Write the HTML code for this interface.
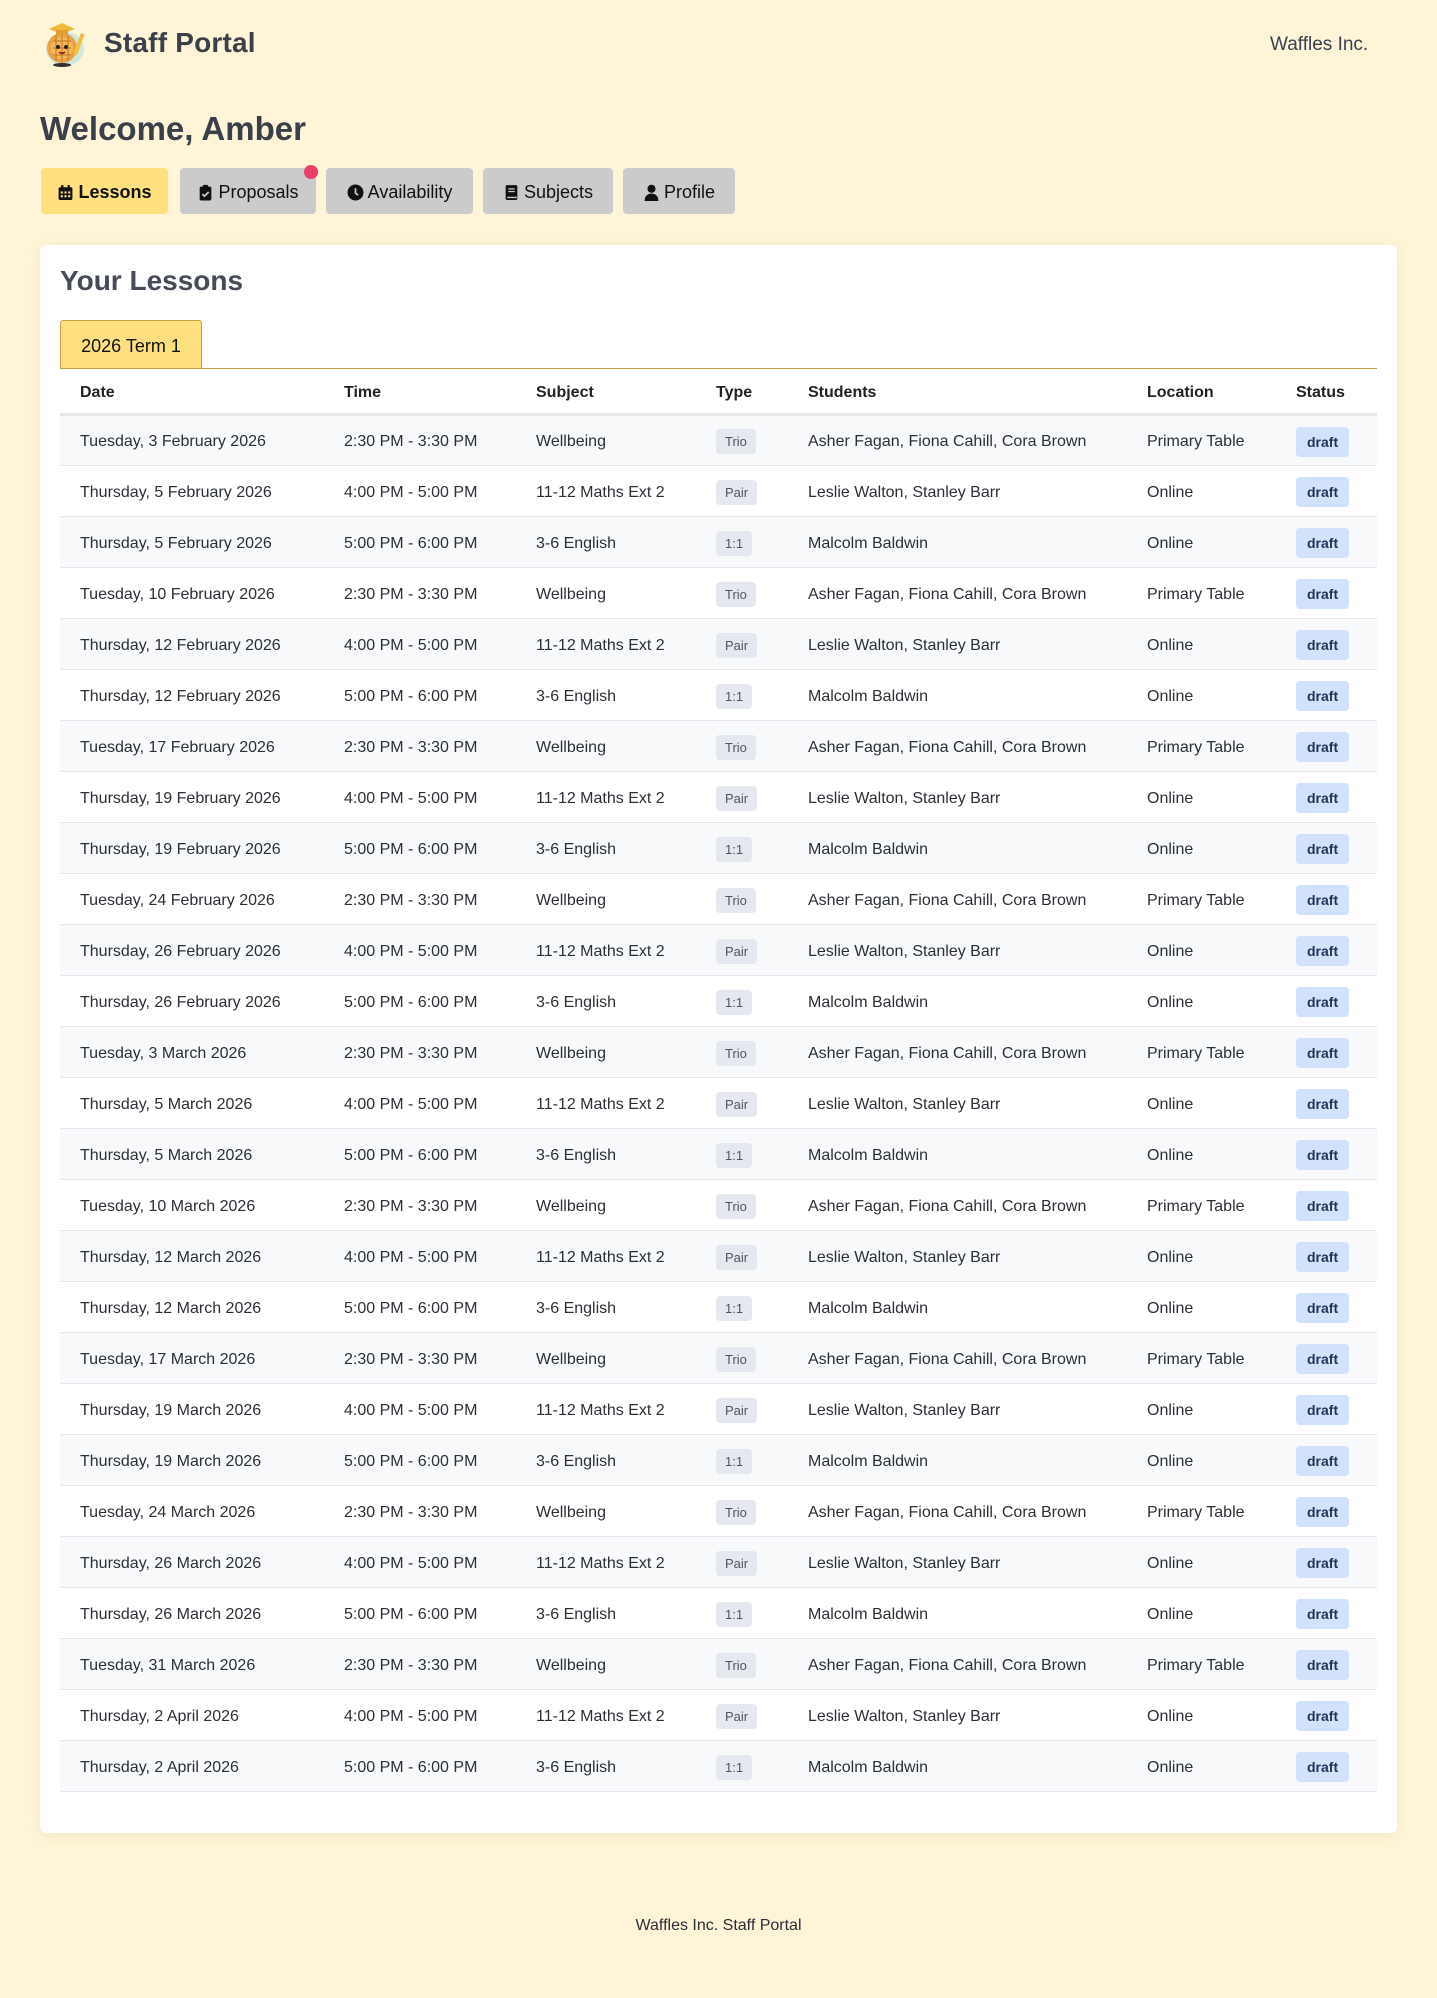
<!DOCTYPE html>
<html><head><meta charset="utf-8">
<style>
*{box-sizing:border-box;margin:0;padding:0}
body{width:1437px;height:1998px;background:#fef5d8;font-family:"Liberation Sans",sans-serif;color:#1f2937;position:relative;overflow:hidden}
.abs{position:absolute}
.brand{left:104px;top:27px;font-size:28px;font-weight:bold;color:#3a3f4a;letter-spacing:0.2px}
.co{left:1270px;top:34px;font-size:19px;color:#374151}
.welcome{left:40px;top:110px;font-size:33px;font-weight:bold;color:#3a3f4a}
.btn{position:absolute;top:168px;height:46px;border-radius:4px;background:#cbcbcb;font-size:18px;color:#111;display:flex;align-items:center;justify-content:center;gap:4px;padding-top:2px}
.btn svg{width:17px;height:17px}
.card{left:40px;top:245px;width:1357px;height:1588px;background:#fff;border-radius:6px;box-shadow:0 2px 14px rgba(200,170,90,.18)}
.h2{left:60px;top:265px;font-size:28px;font-weight:bold;color:#454b57}
.tab{left:60px;top:320px;width:142px;height:49px;background:#ffdf7e;border:1px solid #c2a049;border-bottom:none;border-radius:3px 3px 0 0;font-size:18px;display:flex;align-items:center;justify-content:center;color:#111;padding-top:2px}
.line{left:60px;top:368px;width:1317px;height:1px;background:#c2a049}
table{position:absolute;left:60px;top:369px;width:1317px;border-collapse:collapse;table-layout:fixed;font-size:16px;color:#2b2f36}
th{height:45px;text-align:left;padding-left:20px;padding-top:4px;font-weight:bold;font-size:16px;color:#222;border-bottom:3px solid #e5e7eb}
td{height:51px;padding-left:20px;padding-top:4px;border-bottom:1px solid #e5e7eb;white-space:nowrap}
tbody tr:nth-child(odd){background:#f8f9fa}
.ty{display:inline-block;vertical-align:middle;margin-top:-1px;background:#e6e8ef;color:#4b5563;font-size:13px;height:25px;line-height:25px;padding:0 9px;border-radius:4px}
.dr{display:inline-block;vertical-align:middle;margin-top:-1px;background:#d2e2fb;color:#1e3455;font-size:14px;font-weight:bold;height:30px;line-height:30px;padding:0 11px;border-radius:4px}
.foot{left:0;width:1437px;top:1917px;text-align:center;font-size:16px;color:#2b2f36}
</style></head><body>
<svg class="abs" style="left:41px;top:19px" width="46" height="50" viewBox="0 0 46 50">
<ellipse cx="24" cy="30" rx="19" ry="17" fill="#cfe9df"/>
<circle cx="21" cy="29" r="15" fill="#e9a343"/>
<circle cx="21" cy="29" r="11" fill="#f2b85a"/>
<path d="M12 22h18M12 29h18M12 36h18M15 16v26M21 15v28M27 16v26" stroke="#c9802a" stroke-width="1.2"/>
<polygon points="8,10 21,4 34,10 21,15" fill="#f0b93a"/>
<rect x="15" y="11" width="12" height="5" fill="#e0a030"/>
<circle cx="17" cy="28" r="2" fill="#222"/><circle cx="25" cy="28" r="2" fill="#222"/>
<path d="M18 33q3 3 6 0" stroke="#822" stroke-width="1.5" fill="#d44"/>
<rect x="36" y="14" width="4" height="22" fill="#f4c040" transform="rotate(20 38 25)"/>
<ellipse cx="21" cy="46" rx="9" ry="2" fill="#333"/>
</svg>
<div class="abs brand">Staff Portal</div>
<div class="abs co">Waffles Inc.</div>
<div class="abs welcome">Welcome, Amber</div>

<div class="btn" style="left:41px;width:127px;background:#ffdf7e;font-weight:bold"><svg viewBox="0 0 16 16"><rect x="1.5" y="3" width="13" height="12" rx="1.5" fill="#111"/><rect x="4" y="1" width="2" height="4" fill="#111"/><rect x="10" y="1" width="2" height="4" fill="#111"/><g fill="#ffdf7e"><rect x="3.5" y="7" width="2" height="2"/><rect x="7" y="7" width="2" height="2"/><rect x="10.5" y="7" width="2" height="2"/><rect x="3.5" y="10.5" width="2" height="2"/><rect x="7" y="10.5" width="2" height="2"/><rect x="10.5" y="10.5" width="2" height="2"/></g></svg>Lessons</div>
<div class="btn" style="left:180px;width:136px"><svg viewBox="0 0 16 16"><rect x="2.5" y="2.5" width="11" height="13" rx="1.5" fill="#111"/><rect x="5.5" y="0.8" width="5" height="3" rx="1" fill="#111"/><path d="M5 9.5l2 2 4-4" stroke="#cbcbcb" stroke-width="1.6" fill="none"/></svg>Proposals</div>
<div class="abs" style="left:304px;top:165px;width:14px;height:14px;border-radius:50%;background:#ec3f68"></div>
<div class="btn" style="left:326px;width:147px"><svg viewBox="0 0 16 16"><circle cx="8" cy="8" r="7.5" fill="#111"/><path d="M8 4v4.5l2.5 2" stroke="#cbcbcb" stroke-width="1.6" fill="none"/></svg>Availability</div>
<div class="btn" style="left:483px;width:130px"><svg viewBox="0 0 16 16"><rect x="2.5" y="1" width="11" height="14" rx="1.5" fill="#111"/><rect x="4" y="12" width="9" height="1.3" fill="#cbcbcb"/><rect x="5" y="4" width="6" height="1.2" fill="#cbcbcb"/><rect x="5" y="6.5" width="6" height="1.2" fill="#cbcbcb"/></svg>Subjects</div>
<div class="btn" style="left:623px;width:112px"><svg viewBox="0 0 16 16"><circle cx="8" cy="4.5" r="3.8" fill="#111"/><path d="M1.5 16c0-5 3-7 6.5-7s6.5 2 6.5 7z" fill="#111"/></svg>Profile</div>

<div class="abs card"></div>
<div class="abs h2">Your Lessons</div>
<div class="abs tab">2026 Term 1</div>
<div class="abs line"></div>
<table>
<colgroup><col style="width:264px"><col style="width:192px"><col style="width:180px"><col style="width:92px"><col style="width:339px"><col style="width:149px"><col style="width:101px"></colgroup>
<thead><tr><th>Date</th><th>Time</th><th>Subject</th><th>Type</th><th>Students</th><th>Location</th><th>Status</th></tr></thead>
<tbody>
<tr><td>Tuesday, 3 February 2026</td><td>2:30 PM - 3:30 PM</td><td>Wellbeing</td><td><span class="ty">Trio</span></td><td>Asher Fagan, Fiona Cahill, Cora Brown</td><td>Primary Table</td><td><span class="dr">draft</span></td></tr>
<tr><td>Thursday, 5 February 2026</td><td>4:00 PM - 5:00 PM</td><td>11-12 Maths Ext 2</td><td><span class="ty">Pair</span></td><td>Leslie Walton, Stanley Barr</td><td>Online</td><td><span class="dr">draft</span></td></tr>
<tr><td>Thursday, 5 February 2026</td><td>5:00 PM - 6:00 PM</td><td>3-6 English</td><td><span class="ty">1:1</span></td><td>Malcolm Baldwin</td><td>Online</td><td><span class="dr">draft</span></td></tr>
<tr><td>Tuesday, 10 February 2026</td><td>2:30 PM - 3:30 PM</td><td>Wellbeing</td><td><span class="ty">Trio</span></td><td>Asher Fagan, Fiona Cahill, Cora Brown</td><td>Primary Table</td><td><span class="dr">draft</span></td></tr>
<tr><td>Thursday, 12 February 2026</td><td>4:00 PM - 5:00 PM</td><td>11-12 Maths Ext 2</td><td><span class="ty">Pair</span></td><td>Leslie Walton, Stanley Barr</td><td>Online</td><td><span class="dr">draft</span></td></tr>
<tr><td>Thursday, 12 February 2026</td><td>5:00 PM - 6:00 PM</td><td>3-6 English</td><td><span class="ty">1:1</span></td><td>Malcolm Baldwin</td><td>Online</td><td><span class="dr">draft</span></td></tr>
<tr><td>Tuesday, 17 February 2026</td><td>2:30 PM - 3:30 PM</td><td>Wellbeing</td><td><span class="ty">Trio</span></td><td>Asher Fagan, Fiona Cahill, Cora Brown</td><td>Primary Table</td><td><span class="dr">draft</span></td></tr>
<tr><td>Thursday, 19 February 2026</td><td>4:00 PM - 5:00 PM</td><td>11-12 Maths Ext 2</td><td><span class="ty">Pair</span></td><td>Leslie Walton, Stanley Barr</td><td>Online</td><td><span class="dr">draft</span></td></tr>
<tr><td>Thursday, 19 February 2026</td><td>5:00 PM - 6:00 PM</td><td>3-6 English</td><td><span class="ty">1:1</span></td><td>Malcolm Baldwin</td><td>Online</td><td><span class="dr">draft</span></td></tr>
<tr><td>Tuesday, 24 February 2026</td><td>2:30 PM - 3:30 PM</td><td>Wellbeing</td><td><span class="ty">Trio</span></td><td>Asher Fagan, Fiona Cahill, Cora Brown</td><td>Primary Table</td><td><span class="dr">draft</span></td></tr>
<tr><td>Thursday, 26 February 2026</td><td>4:00 PM - 5:00 PM</td><td>11-12 Maths Ext 2</td><td><span class="ty">Pair</span></td><td>Leslie Walton, Stanley Barr</td><td>Online</td><td><span class="dr">draft</span></td></tr>
<tr><td>Thursday, 26 February 2026</td><td>5:00 PM - 6:00 PM</td><td>3-6 English</td><td><span class="ty">1:1</span></td><td>Malcolm Baldwin</td><td>Online</td><td><span class="dr">draft</span></td></tr>
<tr><td>Tuesday, 3 March 2026</td><td>2:30 PM - 3:30 PM</td><td>Wellbeing</td><td><span class="ty">Trio</span></td><td>Asher Fagan, Fiona Cahill, Cora Brown</td><td>Primary Table</td><td><span class="dr">draft</span></td></tr>
<tr><td>Thursday, 5 March 2026</td><td>4:00 PM - 5:00 PM</td><td>11-12 Maths Ext 2</td><td><span class="ty">Pair</span></td><td>Leslie Walton, Stanley Barr</td><td>Online</td><td><span class="dr">draft</span></td></tr>
<tr><td>Thursday, 5 March 2026</td><td>5:00 PM - 6:00 PM</td><td>3-6 English</td><td><span class="ty">1:1</span></td><td>Malcolm Baldwin</td><td>Online</td><td><span class="dr">draft</span></td></tr>
<tr><td>Tuesday, 10 March 2026</td><td>2:30 PM - 3:30 PM</td><td>Wellbeing</td><td><span class="ty">Trio</span></td><td>Asher Fagan, Fiona Cahill, Cora Brown</td><td>Primary Table</td><td><span class="dr">draft</span></td></tr>
<tr><td>Thursday, 12 March 2026</td><td>4:00 PM - 5:00 PM</td><td>11-12 Maths Ext 2</td><td><span class="ty">Pair</span></td><td>Leslie Walton, Stanley Barr</td><td>Online</td><td><span class="dr">draft</span></td></tr>
<tr><td>Thursday, 12 March 2026</td><td>5:00 PM - 6:00 PM</td><td>3-6 English</td><td><span class="ty">1:1</span></td><td>Malcolm Baldwin</td><td>Online</td><td><span class="dr">draft</span></td></tr>
<tr><td>Tuesday, 17 March 2026</td><td>2:30 PM - 3:30 PM</td><td>Wellbeing</td><td><span class="ty">Trio</span></td><td>Asher Fagan, Fiona Cahill, Cora Brown</td><td>Primary Table</td><td><span class="dr">draft</span></td></tr>
<tr><td>Thursday, 19 March 2026</td><td>4:00 PM - 5:00 PM</td><td>11-12 Maths Ext 2</td><td><span class="ty">Pair</span></td><td>Leslie Walton, Stanley Barr</td><td>Online</td><td><span class="dr">draft</span></td></tr>
<tr><td>Thursday, 19 March 2026</td><td>5:00 PM - 6:00 PM</td><td>3-6 English</td><td><span class="ty">1:1</span></td><td>Malcolm Baldwin</td><td>Online</td><td><span class="dr">draft</span></td></tr>
<tr><td>Tuesday, 24 March 2026</td><td>2:30 PM - 3:30 PM</td><td>Wellbeing</td><td><span class="ty">Trio</span></td><td>Asher Fagan, Fiona Cahill, Cora Brown</td><td>Primary Table</td><td><span class="dr">draft</span></td></tr>
<tr><td>Thursday, 26 March 2026</td><td>4:00 PM - 5:00 PM</td><td>11-12 Maths Ext 2</td><td><span class="ty">Pair</span></td><td>Leslie Walton, Stanley Barr</td><td>Online</td><td><span class="dr">draft</span></td></tr>
<tr><td>Thursday, 26 March 2026</td><td>5:00 PM - 6:00 PM</td><td>3-6 English</td><td><span class="ty">1:1</span></td><td>Malcolm Baldwin</td><td>Online</td><td><span class="dr">draft</span></td></tr>
<tr><td>Tuesday, 31 March 2026</td><td>2:30 PM - 3:30 PM</td><td>Wellbeing</td><td><span class="ty">Trio</span></td><td>Asher Fagan, Fiona Cahill, Cora Brown</td><td>Primary Table</td><td><span class="dr">draft</span></td></tr>
<tr><td>Thursday, 2 April 2026</td><td>4:00 PM - 5:00 PM</td><td>11-12 Maths Ext 2</td><td><span class="ty">Pair</span></td><td>Leslie Walton, Stanley Barr</td><td>Online</td><td><span class="dr">draft</span></td></tr>
<tr><td>Thursday, 2 April 2026</td><td>5:00 PM - 6:00 PM</td><td>3-6 English</td><td><span class="ty">1:1</span></td><td>Malcolm Baldwin</td><td>Online</td><td><span class="dr">draft</span></td></tr>
</tbody></table>
<div class="abs foot">Waffles Inc. Staff Portal</div>
</body></html>
